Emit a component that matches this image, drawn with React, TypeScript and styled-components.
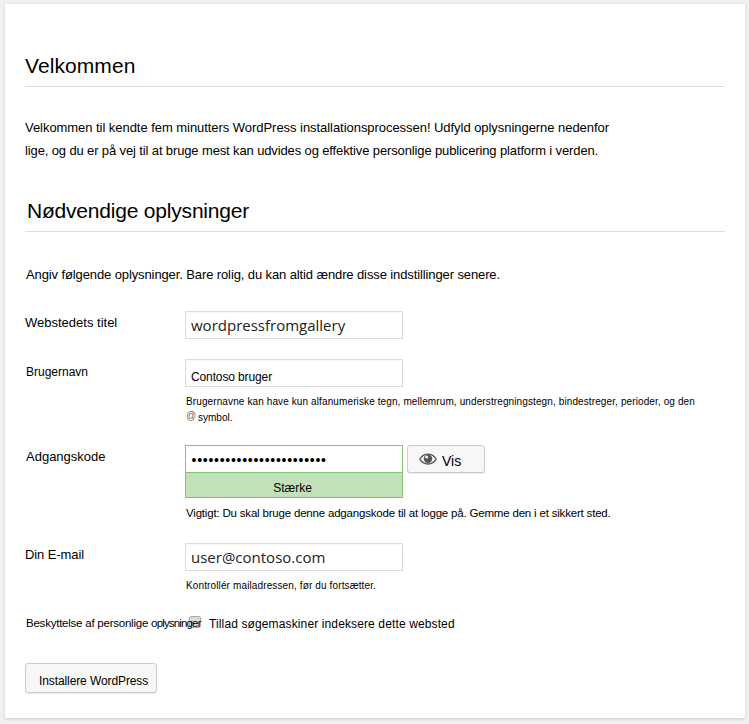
import React from "react";
import styled, { createGlobalStyle } from "styled-components";

const Global = createGlobalStyle`
  * { box-sizing: border-box; }
  body {
    margin: 0;
    background: #f1f1f1;
    color: #000;
    font-family: "Liberation Sans", Arial, sans-serif;
  }
`;

const Page = styled.div`
  height: 724px;
  padding: 4px 4px 6px 5px;
`;

const Card = styled.main`
  height: 714px;
  padding: 0 20px;
  background: #fff;
  box-shadow: 0 1px 3px rgba(0, 0, 0, 0.16);
`;

const Heading = styled.h1<{ $height: number; $indent?: number; $tracking?: number }>`
  margin: 0;
  height: ${(p) => p.$height}px;
  display: flex;
  align-items: flex-end;
  padding: 0 0 8px ${(p) => p.$indent ?? 0}px;
  border-bottom: 1px solid #dedede;
  font-size: 21px;
  font-weight: 400;
  line-height: 24px;
  letter-spacing: ${(p) => p.$tracking ?? 0}px;
`;

const Intro = styled.div`
  height: 82px;
  padding-top: 29px;
`;

const Note = styled.div`
  height: 79px;
  padding: 35px 0 0 1px;
`;

const Text = styled.div<{
  $size?: number;
  $line?: number;
  $tracking?: number;
}>`
  font-size: ${(p) => p.$size ?? 13}px;
  line-height: ${(p) => p.$line ?? 16}px;
  letter-spacing: ${(p) => p.$tracking ?? 0}px;
  white-space: nowrap;
`;

const Row = styled.div<{ $height: number }>`
  display: grid;
  grid-template-columns: 160px 1fr;
  height: ${(p) => p.$height}px;
`;

const Label = styled.label<{ $top: number; $indent?: number; $size?: number; $tracking?: number }>`
  padding: ${(p) => p.$top}px 0 0 ${(p) => p.$indent ?? 0}px;
  font-size: ${(p) => p.$size ?? 13}px;
  line-height: 16px;
  letter-spacing: ${(p) => p.$tracking ?? 0}px;
  white-space: nowrap;
`;

const Tight = styled.span`
  position: relative;
  z-index: 1;
  letter-spacing: -0.84px;
`;

const Field = styled.div<{ $top: number; $size: number; $open?: boolean; $tracking?: number }>`
  width: 218px;
  height: 28px;
  padding: ${(p) => p.$top}px 0 0 5px;
  border: 1px solid #ddd;
  box-shadow: inset 0 1px 2px rgba(0, 0, 0, 0.05);
  color: ${(p) => (p.$open ? "#222" : "#000")};
  font-family: ${(p) => (p.$open ? '"Open Sans", sans-serif' : "inherit")};
  font-size: ${(p) => p.$size}px;
  line-height: 18px;
  letter-spacing: ${(p) => p.$tracking ?? 0}px;
  white-space: nowrap;
`;

const Hint = styled.div<{ $top: number }>`
  padding: ${(p) => p.$top}px 0 0 1px;
`;

const SymbolLine = styled.div`
  display: flex;
  gap: 3px;
  font-size: 10px;
  line-height: 16px;
`;

const At = styled.span`
  width: 9px;
  margin-top: -2px;
  color: #666;
  font-size: 10px;
`;

const PasswordLine = styled.div`
  display: flex;
  gap: 4px;
  height: 53px;
`;

const PasswordBox = styled.div`
  width: 218px;
  height: 53px;
  border: 1px solid #83c373;
`;

const Dots = styled.div`
  height: 26px;
  padding-left: 5.5px;
  font-size: 14px;
  line-height: 29px;
  letter-spacing: 0.73px;
  white-space: nowrap;
`;

const Strength = styled.div`
  height: 25px;
  border-top: 1px solid #83c373;
  background: #c1e1b9;
  padding: 7px 3px 0 0;
  text-align: center;
  font-size: 12px;
  line-height: 16px;
`;

const Button = styled.button<{ $width: number; $height: number }>`
  display: flex;
  align-items: center;
  width: ${(p) => p.$width}px;
  height: ${(p) => p.$height}px;
  padding: 0 0 0 11px;
  border: 1px solid #ccc;
  border-radius: 3px;
  background: #f7f7f7;
  box-shadow: 0 1px 0 rgba(0, 0, 0, 0.08);
  color: #000;
  font: inherit;
`;

const ButtonText = styled.span<{ $size: number; $left: number; $top?: number; $tracking?: number }>`
  padding: ${(p) => p.$top ?? 4}px 0 0 ${(p) => p.$left}px;
  font-size: ${(p) => p.$size}px;
  line-height: 16px;
  letter-spacing: ${(p) => p.$tracking ?? 0}px;
  white-space: nowrap;
`;

const CheckLine = styled.div`
  display: flex;
  gap: 8px;
  padding: 4px 0 0 4px;
`;

const Checkbox = styled.span`
  width: 12px;
  height: 12px;
  border: 1px solid #aaa;
  border-radius: 2px;
  background: #d8dbde;
`;

const Eye = () => (
  <svg width="18" height="14" viewBox="0 0 18 14" fill="none">
    <path d="M.8 7.2C4.6.4 13.4.4 17.2 7.2 13.4 13.6 4.6 13.6.8 7.2Z" stroke="#555" strokeWidth="1.3" />
    <circle cx="9" cy="6.8" r="4.2" fill="#555" />
    <circle cx="7.7" cy="5.1" r="1.5" fill="#f7f7f7" />
  </svg>
);

export default function App() {
  return (
    <>
      <Global />
      <Page>
        <Card>
          <Heading $height={83} $tracking={0.08}>Velkommen</Heading>
          <Intro>
            <Text $line={23} $tracking={-0.048}>
              Velkommen til kendte fem minutters WordPress installationsprocessen! Udfyld oplysningerne nedenfor
            </Text>
            <Text $line={23} $tracking={-0.127}>
              lige, og du er på vej til at bruge mest kan udvides og effektive personlige publicering platform i verden.
            </Text>
          </Intro>
          <Heading as="h2" $height={63} $indent={2} $tracking={-0.2}>
            Nødvendige oplysninger
          </Heading>
          <Note>
            <Text $tracking={-0.11}>
              Angiv følgende oplysninger. Bare rolig, du kan altid ændre disse indstillinger senere.
            </Text>
          </Note>
          <Row $height={48}>
            <Label $top={4}>Webstedets titel</Label>
            <Field $top={4} $size={15} $open>
              wordpressfromgallery
            </Field>
          </Row>
          <Row $height={86}>
            <Label $top={5} $indent={1} $size={12}>
              Brugernavn
            </Label>
            <div>
              <Field $top={8} $size={12} $tracking={-0.12}>
                Contoso bruger
              </Field>
              <Hint $top={7}>
                <Text $size={10} $tracking={0.112}>
                  Brugernavne kan have kun alfanumeriske tegn, mellemrum, understregningstegn, bindestreger, perioder, og den
                </Text>
                <SymbolLine>
                  <At>@</At>
                  <span>symbol.</span>
                </SymbolLine>
              </Hint>
            </div>
          </Row>
          <Row $height={98}>
            <Label $top={4} $indent={1}>
              Adgangskode
            </Label>
            <div>
              <PasswordLine>
                <PasswordBox>
                  <Dots>{"•".repeat(24)}</Dots>
                  <Strength>Stærke</Strength>
                </PasswordBox>
                <Button $width={78} $height={28}>
                  <Eye />
                  <ButtonText $size={14} $left={5}>
                    Vis
                  </ButtonText>
                </Button>
              </PasswordLine>
              <Hint $top={7}>
                <Text $size={11.5} $tracking={-0.19}>
                  Vigtigt: Du skal bruge denne adgangskode til at logge på. Gemme den i et sikkert sted.
                </Text>
              </Hint>
            </div>
          </Row>
          <Row $height={69}>
            <Label $top={4} $tracking={-0.09}>
              Din E-mail
            </Label>
            <div>
              <Field $top={4} $size={15} $open>
                user@contoso.com
              </Field>
              <Hint $top={7}>
                <Text $size={10} $tracking={0.128}>
                  Kontrollér mailadressen, før du fortsætter.
                </Text>
              </Hint>
            </div>
          </Row>
          <Row $height={51}>
            <Label $top={3} $indent={1} $size={11.5} $tracking={-0.23}>
              Beskyttelse af personlige <Tight>oplysninger</Tight>
            </Label>
            <CheckLine>
              <Checkbox />
              <Text $size={12} $tracking={0.125}>
                Tillad søgemaskiner indeksere dette websted
              </Text>
            </CheckLine>
          </Row>
          <Button $width={132} $height={30}>
            <ButtonText $size={12} $left={2} $top={6} $tracking={-0.1}>
              Installere WordPress
            </ButtonText>
          </Button>
        </Card>
      </Page>
    </>
  );
}
